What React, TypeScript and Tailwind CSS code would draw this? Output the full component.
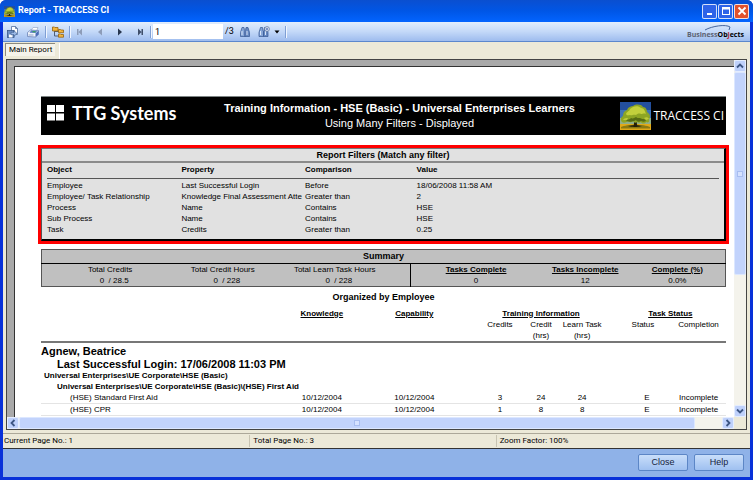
import type { ReactNode } from "react";

const filters = [
  ["Employee", "Last Successful Login", "Before", "18/06/2008 11:58 AM"],
  ["Employee/ Task Relationship", "Knowledge Final Assessment Atte", "Greater than", "2"],
  ["Process", "Name", "Contains", "HSE"],
  ["Sub Process", "Name", "Contains", "HSE"],
  ["Task", "Credits", "Greater than", "0.25"],
];

const tasks = [
  ["(HSE) Standard First Aid", "10/12/2004", "10/12/2004", "3", "24", "24", "E", "Incomplete"],
  ["(HSE) CPR", "10/12/2004", "10/12/2004", "1", "8", "8", "E", "Incomplete"],
];

function TreeLogo({ className }: { className: string }) {
  return (
    <svg className={className} viewBox="0 0 31 28" preserveAspectRatio="none" aria-hidden="true">
      <rect width="31" height="28" fill="#234f9e" />
      <rect y="8" width="31" height="8" fill="#3f74b8" />
      <rect y="16" width="31" height="6" fill="#8fae8c" />
      <rect y="22" width="31" height="6" fill="#e0a818" />
      <path d="M1 25c6-3 23-3 29 0v1.500H1z" fill="#8a7a12" />
      <path d="M8 24c4-1.500 10-1.500 14 0l-3 1H11z" fill="#3a330c" />
      <path d="M13.500 25l1-7h2l.8 7z" fill="#241f08" />
      <path d="M2 20c-2-2-1-5 1-6 0-3 1-5 4-6 1-3 4-4 6-4 3-2 8-2 10 1 3 0 4 3 4 5 3 2 4 5 2 7 1 3-1 4-3 3-1 2-4 2-5 0-1 1-3 1-4 0-1 1-3 1-4-1-2 2-4 1-5 0-2 2-5 2-6 1z" fill="#8da524" />
      <path d="M6 12c1-3 3-2 4-5 3-3 8-4 11-1 3 0 4 3 5 6-2-1-3 0-5 0-2-1-4 0-5 1-3-1-4 1-6 0-2 0-3 1-4-1z" fill="#c2d03c" />
      <path d="M3 18c1-2 3-2 5-2l-1 2zM24 16c2-1 4-1 5 1l-3 1z" fill="#bccb3a" />
      <path d="M6 19c1-2 4-1 5-3 2 1 3 0 5-1 2 2 4 0 6 2 2 0 3 0 4 2-2 1-3 1-5 0-2 1-4 1-5-1-3 2-6 2-10 1z" fill="#566c14" />
    </svg>
  );
}

function Separator() {
  return <span className="h-3 w-px shrink-0 bg-[#7f9fd4] shadow-[1px_0_0_#f1f6ff]" />;
}

function ToolButton({ label, className, disabled, children }: { label: string; className: string; disabled?: boolean; children: ReactNode }) {
  return (
    <button type="button" aria-label={label} disabled={disabled} className={`flex h-4 shrink-0 items-center justify-center ${className}`}>
      {children}
    </button>
  );
}

function Binoculars() {
  return (
    <g>
      <path d="M2.500 1.500h2l.5 3 .5 1v5h-4.500v-4z" fill="#86a5d6" stroke="#34558f" strokeWidth=".7" />
      <path d="M8.500 1.500h-2l-.5 3-.5 1v5h4.500v-4z" fill="#6789c2" stroke="#34558f" strokeWidth=".7" />
      <path d="M2.500 5v4M7.500 5v4" stroke="#e3edfc" strokeWidth=".9" />
    </g>
  );
}

function Toolbar() {
  return (
    <div className="flex h-5 items-center border-b border-[#5b87cd] bg-linear-to-b from-[#e1edfd] via-[#c4d9f8] to-[#9ebcee] pr-1.5 pl-0.5">
      <ToolButton label="Export report" className="w-4">
        <svg className="h-3 w-3" viewBox="0 0 12 12">
          <path d="M4.500.5h4l2 2v6h-6z" fill="#fff" stroke="#52709f" strokeWidth=".8" />
          <path d="M8.500.5v2h2" fill="none" stroke="#52709f" strokeWidth=".8" />
          <rect x=".5" y="4.500" width="6.500" height="7" fill="#6e8fc4" stroke="#385888" strokeWidth=".8" />
          <rect x="2" y="8.500" width="3.500" height="3" fill="#fff" />
          <path d="M4 6.300h3v-1.600l3 2.800-3 2.800v-1.600H4z" fill="#9dbbe8" stroke="#385888" strokeWidth=".6" />
        </svg>
      </ToolButton>
      <ToolButton label="Print report" className="w-6">
        <svg className="h-3 w-3" viewBox="0 0 12 12">
          <path d="M4 4.500l2-3h5l-1.500 3.500z" fill="#fff" stroke="#9aa9c8" strokeWidth=".7" />
          <path d="M.5 6.500l3-2.500 8 .5v4l-3 2.500-8-.5z" fill="#f0f3fa" stroke="#6b83b5" strokeWidth=".8" />
          <path d="M8.500 7.500l3-3v4l-3 2.500z" fill="#4a6cb8" />
          <path d="M4 4.500l6.500.3-2 2.200-6-.3z" fill="#5c7fc6" />
          <path d="M1.500 8.500h5v1h-5z" fill="#8fa3c8" />
          <path d="M5.500 5.700h3" stroke="#3aa655" strokeWidth="1.200" />
        </svg>
      </ToolButton>
      <Separator />
      <ToolButton label="Toggle group tree" className="w-[23px]">
        <svg className="h-3 w-3" viewBox="0 0 12 12">
          <path d="M2.500 4v6H7M2.500 5.500H7" fill="none" stroke="#4f5f7a" />
          <path d="M.5 1h2l.5.5h3V5H.5z" fill="#f3b63c" stroke="#946310" strokeWidth=".8" />
          <path d="M6.500 3.500h2l.5.5h2.500v2.700h-5z" fill="#f3b63c" stroke="#946310" strokeWidth=".8" />
          <path d="M6.500 8h2l.5.5h2.500v2.700h-5z" fill="#f3b63c" stroke="#946310" strokeWidth=".8" />
        </svg>
      </ToolButton>
      <Separator />
      <ToolButton label="First page" className="w-5" disabled>
        <svg className="h-2 w-2" viewBox="0 0 8 8" fill="#8d9cb8">
          <path d="M1 1h1.500v6H1zM6 .5v7L2.500 4z" />
        </svg>
      </ToolButton>
      <ToolButton label="Previous page" className="w-5" disabled>
        <svg className="h-2 w-2" viewBox="0 0 8 8" fill="#8d9cb8">
          <path d="M6 .5v7L2 4z" />
        </svg>
      </ToolButton>
      <ToolButton label="Next page" className="w-5">
        <svg className="h-2 w-2" viewBox="0 0 8 8" fill="#27364f">
          <path d="M2 .5v7L6 4z" />
        </svg>
      </ToolButton>
      <ToolButton label="Last page" className="w-5">
        <svg className="h-2 w-2" viewBox="0 0 8 8" fill="#3f4f6b">
          <path d="M5.500 1H7v6H5.500zM2 .5v7L5.500 4z" />
        </svg>
      </ToolButton>
      <Separator />
      <input aria-label="Page number" defaultValue="1" className="ml-0.5 h-[15px] w-[70px] shrink-0 bg-white px-0.5 text-[9px] text-black outline-none" />
      <span className="ml-0.5 w-3 text-[9px] leading-none">/3</span>
      <ToolButton label="Find text" className="w-4">
        <svg className="h-3 w-3" viewBox="0 0 11 12">
          <Binoculars />
        </svg>
      </ToolButton>
      <ToolButton label="Zoom" className="w-8 gap-1">
        <svg className="h-3 w-3" viewBox="0 0 12 12">
          <Binoculars />
          <circle cx="9" cy="3" r="2.400" fill="#eaf2ff" stroke="#53698f" strokeWidth=".7" />
          <path d="M7.800 3h2.400M9 1.800v2.400" stroke="#2b4c9b" strokeWidth=".7" />
        </svg>
        <svg className="h-1 w-1.5" viewBox="0 0 6 4">
          <path d="M.5.5h5L3 3.500z" />
        </svg>
      </ToolButton>
      <Separator />
      <div className="ml-auto flex flex-col items-end">
        <svg className="mr-3 h-1.5 w-7" viewBox="0 0 28 6" fill="none">
          <path d="M1 5C8 1 22-1 26 2l-1 3" stroke="#46659c" />
        </svg>
        <span className="font-['Open_Sans'] text-[7px] leading-[7px] font-bold text-[#5c6272]">
          Business<span className="text-black">Ob<span className="text-[#b3262f]">j</span>ects</span>
        </span>
      </div>
    </div>
  );
}

function Banner() {
  return (
    <header className="grid h-[39px] grid-cols-[1fr_auto_1fr] items-center border-t border-[#7d8484] bg-black text-white">
      <div className="flex items-center gap-1.5 pb-1.5 pl-1.5">
        <svg className="h-4 w-[17px] shrink-0" viewBox="0 0 17 16" fill="#fff" aria-hidden="true">
          <path d="M0 0h8v7H0zM9 0h8v7H9zM0 8.500h8v7H0zM9 8.500h8v7H9z" />
        </svg>
        <span className="pl-0.5 font-[Lato] text-[18px] leading-5 font-bold whitespace-nowrap">TTG Systems</span>
      </div>
      <div className="pb-0.5 pl-8 text-center whitespace-nowrap">
        <h1 className="text-[11px] leading-[15px] font-bold">Training Information - HSE (Basic) - Universal Enterprises Learners</h1>
        <p className="text-[11px] leading-[14px]">Using Many Filters - Displayed</p>
      </div>
      <div className="flex items-center justify-end gap-0.5 pr-0.5">
        <TreeLogo className="h-7 w-[31px] shrink-0" />
        <span className="font-['Open_Sans'] text-[12px] whitespace-nowrap">TRACCESS CI</span>
      </div>
    </header>
  );
}

function FilterPanel() {
  return (
    <section className="-mx-[3px] mt-2.5 border-3 border-[#f00]">
      <div className="border-t border-r-2 border-b-2 border-l border-t-[#777] border-r-black border-b-black border-l-[#555] bg-[#e1e1e1] pb-1">
        <h2 className="border-b-2 border-[#8b8b8b] text-center text-[9px] leading-3 font-bold">Report Filters (Match any filter)</h2>
        <div className="px-[5px]">
          <table className="w-full table-fixed text-left text-[8px] whitespace-nowrap">
            <colgroup>
              <col className="w-[20%]" />
              <col className="w-[18.4%]" />
              <col className="w-[16.6%]" />
              <col className="w-[45%]" />
            </colgroup>
            <thead>
              <tr className="h-[15px] border-b border-[#555] leading-[14px]">
                <th>Object</th>
                <th>Property</th>
                <th>Comparison</th>
                <th>Value</th>
              </tr>
            </thead>
            <tbody className="leading-[11px] before:block before:h-px">
              {filters.map((row) => (
                <tr key={row[0]}>
                  {row.map((cell, i) => (
                    <td key={i}>{cell}</td>
                  ))}
                </tr>
              ))}
            </tbody>
          </table>
        </div>
      </div>
    </section>
  );
}

function Summary() {
  return (
    <table className="mt-[5px] w-full table-fixed border border-[#555] bg-[#c0c0c0] text-center text-[8px] leading-[11px]">
      <colgroup>
        <col className="w-[20%]" />
        <col className="w-[13%]" />
        <col className="w-[21%]" />
        <col className="w-[19%]" />
        <col className="w-[13%]" />
        <col className="w-[14%]" />
      </colgroup>
      <thead>
        <tr className="border-b border-black">
          <th colSpan={6} className="text-[9px] leading-[13px]">Summary</th>
        </tr>
        <tr>
          <th className="font-normal">Total Credits</th>
          <th className="font-normal">Total Credit Hours</th>
          <th className="border-r border-black pr-2 font-normal">Total Learn Task Hours</th>
          <th className="underline">Tasks Complete</th>
          <th className="underline">Tasks Incomplete</th>
          <th className="underline">Complete (%)</th>
        </tr>
      </thead>
      <tbody>
        <tr>
          <td className="pl-2">0 &nbsp;/ 28.5</td>
          <td className="pl-2">0 &nbsp;/ 228</td>
          <td className="border-r border-black">0 &nbsp;/ 228</td>
          <td>0</td>
          <td>12</td>
          <td>0.0%</td>
        </tr>
      </tbody>
    </table>
  );
}

function TaskTable() {
  return (
    <table className="w-full table-fixed text-center text-[8px] whitespace-nowrap">
      <colgroup>
        <col className="w-[37%]" />
        <col className="w-[8%]" />
        <col className="w-[19%]" />
        <col className="w-[6%]" />
        <col className="w-[6%]" />
        <col className="w-[6%]" />
        <col className="w-[10%]" />
        <col className="w-[8%]" />
      </colgroup>
      <thead className="leading-[11px]">
        <tr className="underline">
          <th />
          <th>Knowledge</th>
          <th>Capability</th>
          <th colSpan={3}>Training Information</th>
          <th colSpan={2} className="pl-3">Task Status</th>
        </tr>
        <tr className="border-b-2 border-[#777] align-top">
          <th colSpan={3} />
          <th className="font-normal">Credits</th>
          <th className="font-normal">Credit<br />(hrs)</th>
          <th className="font-normal">Learn Task<br />(hrs)</th>
          <th className="pl-3 font-normal">Status</th>
          <th className="font-normal">Completion</th>
        </tr>
      </thead>
      <tbody>
        <tr>
          <th colSpan={8} className="pt-px text-left text-[11px] leading-[14px]">Agnew, Beatrice</th>
        </tr>
        <tr>
          <th colSpan={8} className="pl-4 text-left text-[11px] leading-[13px]">Last Successful Login: 17/06/2008 11:03 PM</th>
        </tr>
        <tr>
          <th colSpan={8} className="pl-[3px] text-left leading-[10px]">Universal Enterprises\UE Corporate\HSE (Basic)</th>
        </tr>
        <tr>
          <th colSpan={8} className="pl-4 text-left leading-[11px]">Universal Enterprises\UE Corporate\HSE (Basic)\(HSE) First Aid</th>
        </tr>
        {tasks.map((task) => (
          <tr key={task[0]} className="border-b border-[#e4e4e4] leading-[11px]">
            {task.map((cell, i) => (
              <td key={i} className={i === 0 ? "pl-[29px] text-left" : i === 6 ? "pl-5" : ""}>{cell}</td>
            ))}
          </tr>
        ))}
      </tbody>
    </table>
  );
}

const scrollButton = "flex h-3 w-3 shrink-0 items-center justify-center rounded-xs border border-[#e4edff] bg-[#bfd1fb]";

function Arrow({ d }: { d: string }) {
  return (
    <svg className="h-2 w-2" viewBox="0 0 8 8" fill="none" stroke="#3d5684" strokeWidth="1.800">
      <path d={d} />
    </svg>
  );
}

function Viewer() {
  return (
    <main className="mx-[3px] grid flex-1 grid-cols-[1fr_12px] grid-rows-[1fr_12px] border border-[#444] bg-[#a9a9a9]">
      <div className="overflow-hidden pt-1.5 pl-[7px]">
        <div className="h-full border-t border-l border-[#333] bg-white pt-[29px] pr-2 pl-[26px]">
          <Banner />
          <FilterPanel />
          <Summary />
          <h2 className="pt-[3px] pb-1 text-center text-[9px] leading-[14px] font-bold">Organized by Employee</h2>
          <TaskTable />
        </div>
      </div>
      <div className="flex flex-col bg-[#f4f3ec]">
        <button type="button" aria-label="Scroll up" className={scrollButton}><Arrow d="M1 5.500l3-3 3 3" /></button>
        <div className="flex h-[57%] items-center justify-center rounded-xs border border-[#dce7ff] bg-[#c2d3fc]">
          <span className="h-1.5 w-1.5 border border-[#a8bdf0] bg-[#d5e1ff]" />
        </div>
        <button type="button" aria-label="Scroll down" className={`${scrollButton} mt-auto`}><Arrow d="M1 2.500l3 3 3-3" /></button>
      </div>
      <div className="flex bg-[#f4f3ec]">
        <button type="button" aria-label="Scroll left" className={scrollButton}><Arrow d="M5.500 1l-3 3 3 3" /></button>
        <div className="flex w-[93%] items-center justify-center rounded-xs border border-[#dce7ff] bg-[#c2d3fc]">
          <span className="h-1.5 w-1.5 border border-[#a8bdf0] bg-[#d5e1ff]" />
        </div>
        <button type="button" aria-label="Scroll right" className={`${scrollButton} ml-auto`}><Arrow d="M2.500 1l3 3-3 3" /></button>
      </div>
      <div className="bg-[#ece9d8]" />
    </main>
  );
}

const dialogButton = "h-[17px] w-[50px] rounded-xs border border-[#5c86c6] bg-linear-to-b from-[#c9defa] to-[#9fc0f0] text-[9px] leading-none text-[#16233d]";
const captionButton = "flex h-[15px] w-[15px] items-center justify-center rounded-xs border border-white/80";

export default function App() {
  return (
    <div className="min-h-screen bg-white text-black">
      <div className="flex min-h-screen flex-col rounded-t-md bg-[#0831d9] px-[3px] pb-[3px] font-['Liberation_Sans',Arial,sans-serif]">
        <div className="-mx-[3px] flex h-[22px] items-center gap-[3px] rounded-t-md bg-linear-to-b from-[#0a4fd0] via-[#0056e6] to-[#0364ff] px-1">
          <TreeLogo className="h-[11px] w-[11px]" />
          <span className="font-[Roboto] text-[9px] font-bold text-white">Report - TRACCESS CI</span>
          <div className="ml-auto flex gap-px">
            <button type="button" aria-label="Minimize" className={`${captionButton} bg-[#2e63e8]`}>
              <svg className="h-2.5 w-2.5" viewBox="0 0 10 10"><path d="M2 7h5v2H2z" fill="#fff" /></svg>
            </button>
            <button type="button" aria-label="Maximize" className={`${captionButton} bg-[#2e63e8]`}>
              <svg className="h-2.5 w-2.5" viewBox="0 0 10 10"><path d="M1 1h8v8H1zM2 3.500V8h6V3.500z" fill="#fff" fillRule="evenodd" /></svg>
            </button>
            <button type="button" aria-label="Close window" className={`${captionButton} bg-[#e2512c]`}>
              <svg className="h-2.5 w-2.5" viewBox="0 0 10 10"><path d="M1.500 1.500l7 7M8.500 1.500l-7 7" stroke="#fff" strokeWidth="1.800" /></svg>
            </button>
          </div>
        </div>
        <div className="flex flex-1 flex-col bg-[#ece9d8] font-[Roboto]">
          <Toolbar />
          <div className="flex h-[17px] pt-px pl-0.5">
            <button type="button" className="h-[13px] border-t border-l border-[#8c8a7e] bg-[#f5f3ea] px-[3px] text-[8px] leading-3">Main Report</button>
            <span className="ml-1 border-l border-white" />
          </div>
          <div className="flex flex-1 flex-col font-['Liberation_Sans',Arial,sans-serif]">
            <Viewer />
          </div>
          <footer className="mt-[3px] grid h-[15px] grid-cols-[1fr_1fr_1fr] items-center border-t border-[#aca899] pr-2 text-[8px] leading-3">
            <span className="pl-px">Current Page No.: 1</span>
            <span className="border-l border-[#c8c4b2] pl-[3px]">Total Page No.: 3</span>
            <span className="border-l border-[#c8c4b2] pl-[3px]">Zoom Factor: 100%</span>
          </footer>
        </div>
        <div className="flex items-center justify-end gap-1.5 border-t border-[#333] bg-[#8fb2e8] pt-[5px] pr-1.5 pb-1.5">
          <button type="button" className={dialogButton}>Close</button>
          <button type="button" className={dialogButton}>Help</button>
        </div>
      </div>
    </div>
  );
}
